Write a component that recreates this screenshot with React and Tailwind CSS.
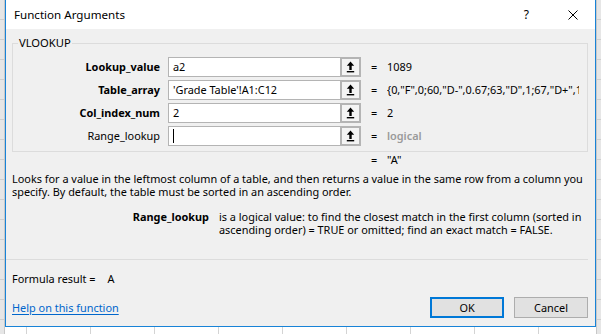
import React from 'react';

const font = { fontFamily: '"Noto Sans", "Open Sans", sans-serif' };

const RefIcon = () => (
    <svg width="9" height="12" viewBox="0 0 9 12">
        <path d="M4.5 0.5 L0.8 4.8 H3.3 V9 H5.7 V4.8 H8.2 Z" fill="#000" />
        <rect x="0.8" y="10" width="7.4" height="1.4" fill="#000" />
    </svg>
);

const ArgRow = ({ label, bold, value, result, dim }) => (
    <div className="flex items-center h-[20px] min-w-0">
        <span className={`w-[147px] text-right shrink-0 ${bold ? 'font-bold' : ''}`}>{label}</span>
        <div className="ml-[8px] w-[172px] h-[20px] shrink-0 bg-white border border-[#b4b4b4] border-r-0 flex items-center pl-[4px]">
            {value === '' ? <span className="w-px h-[14px] bg-black" /> : value}
        </div>
        <div className="w-[21px] h-[20px] shrink-0 border-2 border-[#b4b4b4] bg-[#f4f4f4] flex items-center justify-center">
            <RefIcon />
        </div>
        <span className="ml-[10px] w-[16px] shrink-0">=</span>
        <span className={`min-w-0 flex-1 mr-[8px] whitespace-nowrap overflow-hidden ${dim ? 'text-[#9a9a9a] font-semibold' : ''}`}>{result}</span>
    </div>
);

const App = () => {
    return (
        <div className="w-[601px] h-[334px] overflow-hidden flex bg-white text-[10.9px] text-black" style={font}>
            <div className="w-[5px] shrink-0 bg-[#e6e6e6] border-r border-[#c8c8c8] bg-[repeating-linear-gradient(180deg,transparent_0_19px,#cfcfcf_19px_20px)]" />

            <div className="flex flex-col w-[591px] shrink-0">
                <div className="h-[327px] flex flex-col border-x border-b border-[#1883d7]">
                    {/* title bar */}
                    <div className="h-[29px] bg-white flex items-center pl-[8px] shrink-0">
                        <span className="text-[11.6px]">Function Arguments</span>
                        <span className="ml-auto mr-[39px] text-[12px]">?</span>
                        <svg className="mr-[17px]" width="10" height="10" viewBox="0 0 10 10">
                            <path d="M0.5 0.5 L9.5 9.5 M9.5 0.5 L0.5 9.5" stroke="#000" strokeWidth="1" />
                        </svg>
                    </div>

                    {/* body */}
                    <div className="flex-1 bg-[#f0f0f0] pl-[6px] pr-[7px] flex flex-col leading-[14px]">
                        <fieldset className="mt-[6px] min-w-0 border border-[#dcdcdc] px-0 pb-[5px]">
                            <legend className="ml-[5px] px-[1px] leading-[16px] text-[11.2px]">VLOOKUP</legend>
                            <div className="mt-[6px] flex flex-col gap-[3px]">
                                <ArgRow label="Lookup_value" bold value="a2" result="1089" />
                                <ArgRow label="Table_array" bold value="'Grade Table'!A1:C12" result={'{0,"F",0;60,"D-",0.67;63,"D",1;67,"D+",1;70,"C-",1.67;73,"C",2}'} />
                                <ArgRow label="Col_index_num" bold value="2" result="2" />
                                <ArgRow label="Range_lookup" value="" result="logical" dim />
                            </div>
                        </fieldset>

                        <div className="mt-[1px] flex">
                            <span className="ml-[359px] w-[16px]">=</span>
                            <span>"A"</span>
                        </div>

                        <p className="mt-[5px] leading-[13px] whitespace-nowrap">
                            Looks for a value in the leftmost column of a table, and then returns a value in the same row from a column you
                            <br />
                            specify. By default, the table must be sorted in an ascending order.
                        </p>

                        <div className="mt-[12px] flex leading-[13px]">
                            <span className="w-[197px] text-right font-bold shrink-0">Range_lookup</span>
                            <p className="ml-[10px] whitespace-nowrap">
                                is a logical value: to find the closest match in the first column (sorted in
                                <br />
                                ascending order) = TRUE or omitted; find an exact match = FALSE.
                            </p>
                        </div>

                        <div className="mt-[23px] -ml-[6px] border-t border-[#dcdcdc]" />

                        <div className="mt-[12px] flex">
                            <span>Formula result =</span>
                            <span className="ml-[12px]">A</span>
                        </div>

                        <div className="mt-[11px] flex items-center h-[21px]">
                            <a className="text-[#0066cc] underline underline-offset-2 mt-[1px]">Help on this function</a>
                            <button className="ml-auto w-[74px] h-[21px] border-2 border-[#0078d7] bg-[#e1e1e1]">OK</button>
                            <button className="ml-[10px] w-[74px] h-[21px] border border-[#adadad] bg-[#e1e1e1]">Cancel</button>
                        </div>
                    </div>
                </div>
                <div className="flex-1 bg-[repeating-linear-gradient(90deg,transparent_0_21px,#d4d4d4_21px_22px,transparent_22px_64px)]" />
            </div>

            <div className="flex-1 bg-[#e6e6e6] border-l border-[#c8c8c8] bg-[repeating-linear-gradient(180deg,transparent_0_19px,#cfcfcf_19px_20px)]" />
        </div>
    );
};

export default App;
